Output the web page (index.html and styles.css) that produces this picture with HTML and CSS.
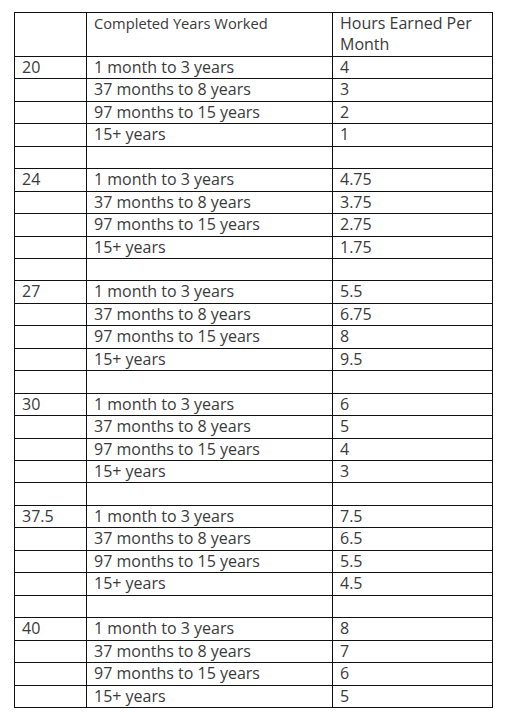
FILE: index.html
```html
<!DOCTYPE html>
<html>
<head>
<meta charset="utf-8">
<link rel="stylesheet" href="styles.css">
</head>
<body>
<div class="wrap">
<table class="hours">
<colgroup><col class="c1"><col class="c2"><col class="c3"></colgroup>
<tr class="head"><td></td><td class="small">Completed Years Worked</td><td>Hours Earned Per Month</td></tr>
<tr><td>20</td><td>1 month to 3 years</td><td>4</td></tr>
<tr><td></td><td>37 months to 8 years</td><td>3</td></tr>
<tr><td></td><td>97 months to 15 years</td><td>2</td></tr>
<tr><td></td><td>15+ years</td><td>1</td></tr>
<tr><td></td><td></td><td></td></tr>
<tr><td>24</td><td>1 month to 3 years</td><td>4.75</td></tr>
<tr><td></td><td>37 months to 8 years</td><td>3.75</td></tr>
<tr><td></td><td>97 months to 15 years</td><td>2.75</td></tr>
<tr><td></td><td>15+ years</td><td>1.75</td></tr>
<tr><td></td><td></td><td></td></tr>
<tr><td>27</td><td>1 month to 3 years</td><td>5.5</td></tr>
<tr><td></td><td>37 months to 8 years</td><td>6.75</td></tr>
<tr><td></td><td>97 months to 15 years</td><td>8</td></tr>
<tr><td></td><td>15+ years</td><td>9.5</td></tr>
<tr><td></td><td></td><td></td></tr>
<tr><td>30</td><td>1 month to 3 years</td><td>6</td></tr>
<tr><td></td><td>37 months to 8 years</td><td>5</td></tr>
<tr><td></td><td>97 months to 15 years</td><td>4</td></tr>
<tr><td></td><td>15+ years</td><td>3</td></tr>
<tr><td></td><td></td><td></td></tr>
<tr><td>37.5</td><td>1 month to 3 years</td><td>7.5</td></tr>
<tr><td></td><td>37 months to 8 years</td><td>6.5</td></tr>
<tr><td></td><td>97 months to 15 years</td><td>5.5</td></tr>
<tr><td></td><td>15+ years</td><td>4.5</td></tr>
<tr><td></td><td></td><td></td></tr>
<tr><td>40</td><td>1 month to 3 years</td><td>8</td></tr>
<tr><td></td><td>37 months to 8 years</td><td>7</td></tr>
<tr><td></td><td>97 months to 15 years</td><td>6</td></tr>
<tr><td></td><td>15+ years</td><td>5</td></tr>
</table>
</div>
</body>
</html>
```
FILE: styles.css
```css
html, body {
  margin: 0;
  padding: 0;
  background: #fff;
}
.wrap {
  padding: 12px 0 0 14px;
}
.hours {
  border-collapse: collapse;
  table-layout: fixed;
  width: 479px;
  font-family: "Open Sans", sans-serif;
  font-size: 16px;
  line-height: 21.45px;
  color: #3a3a3a;
}
.c1 { width: 72px; }
.c2 { width: 246px; }
.c3 { width: 160px; }
.hours td {
  border: 1px solid #111;
  padding: 0 7px;
  height: 21.45px;
  vertical-align: top;
  white-space: nowrap;
}
.hours .head td {
  white-space: normal;
}
.hours td.small {
  font-size: 14.7px;
}
```
